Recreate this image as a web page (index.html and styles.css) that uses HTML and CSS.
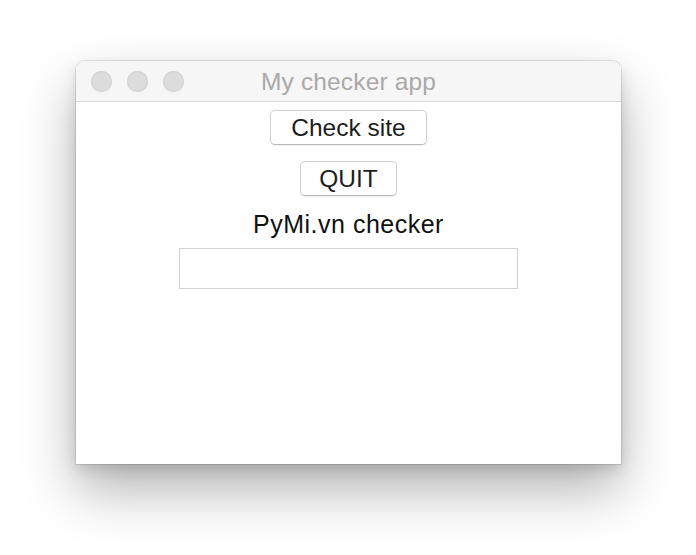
FILE: index.html
```html
<!DOCTYPE html>
<html>
<head>
<meta charset="utf-8">
<link rel="stylesheet" href="styles.css">
</head>
<body>
<div class="desktop">
  <div class="window">
    <div class="titlebar">
      <div class="lights">
        <span class="light"></span>
        <span class="light"></span>
        <span class="light"></span>
      </div>
      <div class="title">My checker app</div>
    </div>
    <div class="content">
      <button class="btn btn-check">Check site</button>
      <button class="btn btn-quit">QUIT</button>
      <div class="label">PyMi.vn checker</div>
      <div class="entry"></div>
    </div>
  </div>
</div>
</body>
</html>
```
FILE: styles.css
```css
html, body {
  margin: 0;
  padding: 0;
  background: #ffffff;
  font-family: "Liberation Sans", Arial, sans-serif;
}
.desktop {
  width: 696px;
  height: 555px;
  padding: 61px 0 0 76px;
  box-sizing: border-box;
}
.window {
  width: 545px;
  height: 403px;
  background: #ffffff;
  border-radius: 9px 9px 0 0;
  box-shadow: 0 0 0 1px rgba(0,0,0,0.10), 0 26px 54px rgba(0,0,0,0.30), 0 6px 14px rgba(0,0,0,0.12);
  display: flex;
  flex-direction: column;
  overflow: hidden;
}
.titlebar {
  height: 40px;
  background: #f6f6f6;
  border-bottom: 1px solid #d9d9d9;
  position: relative;
  display: flex;
  align-items: center;
  justify-content: center;
  flex-shrink: 0;
}
.lights {
  position: absolute;
  left: 15px;
  top: 10px;
  display: flex;
  gap: 15px;
}
.light {
  width: 21px;
  height: 21px;
  border-radius: 50%;
  background: #dcdcdc;
  box-shadow: inset 0 0 0 1px #d2d2d2;
}
.title {
  color: #a9a9a9;
  font-size: 24.5px;
  margin-top: 2px;
  letter-spacing: 0.15px;
}
.content {
  display: flex;
  flex-direction: column;
  align-items: center;
  padding-top: 8px;
}
.btn {
  font-family: "Liberation Sans", Arial, sans-serif;
  font-size: 24.5px;
  color: #1d1d1d;
  background: #ffffff;
  border: 1px solid #cfcfcf;
  border-bottom-color: #b8b8b8;
  border-radius: 5px;
  height: 35px;
  padding: 0;
  box-shadow: 0 1px 1px rgba(0,0,0,0.06);
}
.btn-check {
  width: 157px;
}
.btn-quit {
  width: 97px;
  margin-top: 16px;
}
.label {
  font-size: 25px;
  color: #111111;
  margin-top: 12px;
  line-height: 32px;
  letter-spacing: 0.5px;
}
.entry {
  width: 339px;
  height: 41px;
  box-sizing: border-box;
  border: 1px solid #d2d2d2;
  margin-top: 8px;
  background: #ffffff;
}
```
